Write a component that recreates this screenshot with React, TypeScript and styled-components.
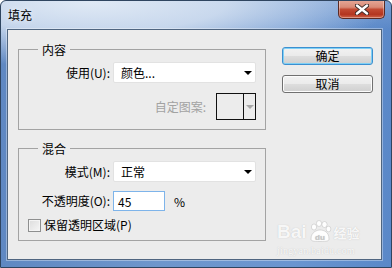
import React from 'react';
import styled, { createGlobalStyle } from 'styled-components';

const Global = createGlobalStyle`
  html, body { margin: 0; padding: 0; background: #ffffff; }
  body { font-family: "Noto Sans CJK SC", "Noto Sans", sans-serif; font-size: 12px; color: #111; }
  * { box-sizing: border-box; }
`;

const Window = styled.div`
  position: relative;
  width: 392px;
  height: 268px;
  display: flex;
  flex-direction: column;
  border: 1px solid #2f4560;
  border-radius: 6px 6px 0 0;
  background:
    radial-gradient(ellipse 300px 64px at 90px 2px, rgba(226,235,246,0.97) 0%, rgba(214,226,242,0.85) 45%, rgba(214,226,242,0) 100%),
    linear-gradient(to bottom, rgba(255,255,255,0.18), rgba(255,255,255,0) 28px),
    linear-gradient(to right, #5f88c2 0%, #6e96cc 40%, #6a95d0 75%, #5a88c8 100%);
  overflow: hidden;
`;

const TitleBar = styled.div`
  height: 28px;
  display: flex;
  align-items: flex-start;
  justify-content: space-between;
  flex: none;
`;

const Title = styled.div`
  padding: 6px 0 0 7px;
  font-size: 12px;
  line-height: 16px;
  color: #000;
  text-shadow: 0 0 6px rgba(255,255,255,0.9);
`;

const CloseButton = styled.div`
  width: 47px;
  height: 19px;
  margin: -1px 6px 0 0;
  border: 1px solid #5a2a24;
  border-top: none;
  border-radius: 0 0 5px 5px;
  background: linear-gradient(to bottom, #e6a898 0%, #d98a76 40%, #c24a33 52%, #b33520 80%, #d0654a 100%);
  box-shadow: inset 0 0 0 1px rgba(255,255,255,0.35);
  display: flex;
  align-items: center;
  justify-content: center;
`;

const Client = styled.div`
  flex: 1;
  margin: 0 9px 7px 6px;
  border: 1px solid #4f6580;
  box-shadow: 0 0 0 1px rgba(255,255,255,0.35);
  background: #ececec;
  display: flex;
  align-items: flex-start;
  padding: 0 8px 0 10px;
`;

const Groups = styled.div`
  width: 248px;
  padding-top: 12px;
  display: flex;
  flex-direction: column;
  flex: none;
`;

const Group = styled.fieldset<{ $top?: number; $pt: number; $pb: number }>`
  margin: ${p => p.$top ?? 0}px 0 0 0;
  padding: ${p => p.$pt}px 9px ${p => p.$pb}px 9px;
  border: 1px solid #a3a3a3;
  min-inline-size: 0;
  display: flex;
  flex-direction: column;
`;

const Legend = styled.legend`
  margin-left: 10px;
  padding: 0 4px;
  font-size: 12px;
  line-height: 15px;
  color: #000;
`;

const FieldRow = styled.div<{ $h: number; $mt?: number }>`
  display: grid;
  grid-template-columns: 82px auto auto 1fr;
  column-gap: 3px;
  align-items: center;
  height: ${p => p.$h}px;
  margin-top: ${p => p.$mt ?? 0}px;
`;

const Label = styled.span<{ $disabled?: boolean }>`
  text-align: right;
  white-space: nowrap;
  font-size: 12px;
  line-height: 16px;
  color: ${p => (p.$disabled ? '#a2a2a2' : '#000')};
`;

const Select = styled.div`
  width: 143px;
  height: 21px;
  background: #ffffff;
  border: 1px solid #e2e2e2;
  border-radius: 2px;
  display: flex;
  align-items: center;
  justify-content: space-between;
  padding: 0 3px 0 7px;
  font-size: 12px;
  color: #000;
`;

const Arrow = styled.span<{ $color?: string }>`
  width: 0;
  height: 0;
  border-left: 4px solid transparent;
  border-right: 4px solid transparent;
  border-top: 4px solid ${p => p.$color ?? '#000'};
`;

const PatternRow = styled.div`
  display: flex;
  justify-content: flex-end;
  align-items: center;
  gap: 10px;
  margin-top: 10px;
  height: 27px;
`;

const PatternPicker = styled.div`
  width: 40px;
  height: 27px;
  border: 1px solid #111;
  display: grid;
  grid-template-columns: 27px 11px;
`;

const PatternSwatch = styled.div`
  border-right: 1px solid #111;
`;

const PatternArrow = styled.div`
  display: flex;
  align-items: center;
  justify-content: center;
`;

const TextInput = styled.div`
  width: 52px;
  height: 20px;
  background: #fff;
  border: 1px solid #7eb4ea;
  display: flex;
  align-items: center;
  padding-left: 4px;
  font-size: 12px;
  color: #000;
`;

const Unit = styled.span`
  margin-left: 6px;
  font-size: 12px;
  color: #000;
`;

const CheckRow = styled.label`
  display: flex;
  align-items: center;
  gap: 3px;
  height: 16px;
  margin-top: 6px;
  font-size: 12px;
  line-height: 16px;
  color: #000;
`;

const CheckBox = styled.span`
  width: 13px;
  height: 13px;
  border: 1px solid #8e8f8f;
  background: linear-gradient(135deg, #dcdcdc 0%, #f6f6f6 100%);
  box-shadow: inset 0 0 0 1px #f4f4f4;
`;

const Buttons = styled.div`
  margin-left: 16px;
  padding-top: 17px;
  width: 91px;
  display: flex;
  flex-direction: column;
  gap: 10px;
  flex: none;
`;

const Button = styled.div<{ $default?: boolean }>`
  height: 18px;
  border: 1px solid ${p => (p.$default ? '#3c8fd0' : '#707070')};
  border-radius: 3px;
  background: linear-gradient(to bottom, #f2f2f2 0%, #ebebeb 48%, #dddddd 52%, #cfcfcf 100%);
  box-shadow: ${p => (p.$default ? 'inset 0 0 0 1px #7fd0f5' : 'inset 0 0 0 1px #fcfcfc')};
  display: flex;
  align-items: center;
  justify-content: center;
  font-size: 12px;
  line-height: 14px;
  color: #000;
`;

const Watermark = styled.div`
  position: absolute;
  left: 276px;
  top: 219px;
  display: flex;
  flex-direction: column;
  align-items: flex-start;
  color: rgba(255,255,255,0.9);
  text-shadow: 0 0 1px rgba(150,150,150,0.55);
  pointer-events: none;
`;

const WmTop = styled.div`
  display: flex;
  align-items: flex-end;
  gap: 1px;
  font-family: "Liberation Sans", Arial, sans-serif;
  font-weight: bold;
  font-size: 19px;
  line-height: 21px;
`;

const WmCn = styled.span`
  font-family: "Noto Sans CJK SC", sans-serif;
  font-weight: bold;
  font-size: 13px;
  line-height: 18px;
  margin-left: 1px;
`;

const WmBottom = styled.div`
  font-family: "Liberation Serif", serif;
  font-size: 10px;
  line-height: 12px;
  margin-top: 3px;
  letter-spacing: 0.2px;
`;

export default function App() {
  return (
    <>
      <Global />
      <Window>
        <TitleBar>
          <Title>填充</Title>
          <CloseButton>
            <svg width="14" height="11" viewBox="0 0 14 11">
              <path d="M2 1.5 L12 9.5 M12 1.5 L2 9.5" stroke="#3a2a28" strokeWidth="4.2" strokeLinecap="round" />
              <path d="M2 1.5 L12 9.5 M12 1.5 L2 9.5" stroke="#ffffff" strokeWidth="2.4" strokeLinecap="round" />
            </svg>
          </CloseButton>
        </TitleBar>
        <Client>
          <Groups>
            <Group $pt={5} $pb={9}>
              <Legend>内容</Legend>
              <FieldRow $h={21}>
                <Label>使用(U):</Label>
                <Select>
                  <span>颜色...</span>
                  <Arrow />
                </Select>
              </FieldRow>
              <PatternRow>
                <Label $disabled>自定图案:</Label>
                <PatternPicker>
                  <PatternSwatch />
                  <PatternArrow>
                    <Arrow $color="#a8a8a8" />
                  </PatternArrow>
                </PatternPicker>
              </PatternRow>
            </Group>
            <Group $top={11} $pt={5} $pb={7}>
              <Legend>混合</Legend>
              <FieldRow $h={21}>
                <Label>模式(M):</Label>
                <Select>
                  <span>正常</span>
                  <Arrow />
                </Select>
              </FieldRow>
              <FieldRow $h={20} $mt={9}>
                <Label>不透明度(O):</Label>
                <TextInput>45</TextInput>
                <Unit>%</Unit>
              </FieldRow>
              <CheckRow>
                <CheckBox />
                <span>保留透明区域(P)</span>
              </CheckRow>
            </Group>
          </Groups>
          <Buttons>
            <Button $default>确定</Button>
            <Button>取消</Button>
          </Buttons>
        </Client>
        <Watermark>
          <WmTop>
            <span>Bai</span>
            <svg width="24" height="22" viewBox="0 0 24 22">
              <ellipse cx="6" cy="7" rx="2.6" ry="3" fill="rgba(255,255,255,0.92)" stroke="#bbb" strokeWidth="0.5" />
              <ellipse cx="11" cy="3.5" rx="2.6" ry="3" fill="rgba(255,255,255,0.92)" stroke="#bbb" strokeWidth="0.5" />
              <ellipse cx="16.5" cy="4.5" rx="2.6" ry="3" fill="rgba(255,255,255,0.92)" stroke="#bbb" strokeWidth="0.5" />
              <ellipse cx="20.5" cy="9" rx="2.4" ry="2.8" fill="rgba(255,255,255,0.92)" stroke="#bbb" strokeWidth="0.5" />
              <path d="M3 19 C3 12 9 10 12 10 C16 10 21 12 21 19 C21 21 19 21.5 12 21.5 C5 21.5 3 21 3 19 Z" fill="rgba(255,255,255,0.92)" stroke="#bbb" strokeWidth="0.5" />
              <text x="12" y="19.5" textAnchor="middle" fontSize="8" fontFamily="Liberation Sans, sans-serif" fontWeight="bold" fill="#c8c8c8">du</text>
            </svg>
            <WmCn>经验</WmCn>
          </WmTop>
          <WmBottom>jingyan.baidu.com</WmBottom>
        </Watermark>
      </Window>
    </>
  );
}
